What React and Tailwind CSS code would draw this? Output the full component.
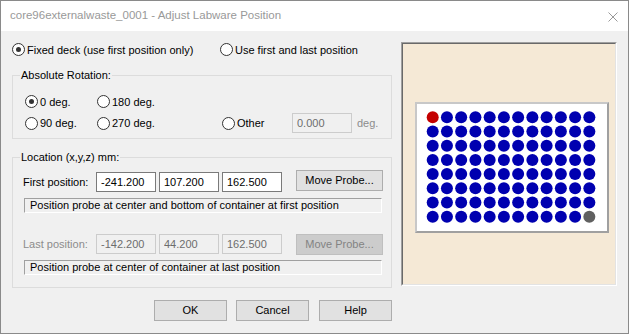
const WELL_ROWS = 8;
const WELL_COLS = 12;

function Radio({ checked, label, disabled, className = "" }) {
  return (
    <div className={`flex items-center ${className}`}>
      <span className="flex h-[13px] w-[13px] shrink-0 items-center justify-center rounded-full border border-[#333333] bg-white">
        {checked && <span className="h-[5px] w-[5px] rounded-full bg-[#333333]" />}
      </span>
      <span className={`ml-[2px] leading-[14px] ${disabled ? "text-[#8c8c8c]" : ""}`}>{label}</span>
    </div>
  );
}

function Field({ value, disabled, className = "" }) {
  return (
    <input
      readOnly
      value={value}
      className={`h-[20px] w-[60px] shrink-0 border px-[4px] outline-none ${
        disabled ? "border-[#cccccc] bg-[#f0f0f0] text-[#6d6d6d]" : "border-[#7a7a7a] bg-white text-black"
      } ${className}`}
    />
  );
}

function WinButton({ children, disabled, className = "" }) {
  return (
    <button
      className={`flex h-[21px] shrink-0 items-center justify-center border ${
        disabled ? "border-[#bfbfbf] bg-[#cccccc] text-[#838383]" : "border-[#adadad] bg-[#e1e1e1] text-black"
      } ${className}`}
    >
      {children}
    </button>
  );
}

function StatusLine({ children, className = "" }) {
  return (
    <div
      className={`ml-[1px] flex h-[15px] w-[358px] items-center border-t border-l border-t-[#a0a0a0] border-l-[#a0a0a0] border-r border-b border-r-white border-b-white pl-[5px] leading-[13px] ${className}`}
    >
      {children}
    </div>
  );
}

function GroupLabel({ children }) {
  return (
    <span className="absolute -top-[8px] left-[7px] bg-[#f0f0f0] px-[1px] leading-[14px]">{children}</span>
  );
}

function Plate() {
  const wells = [];
  for (let r = 0; r < WELL_ROWS; r++) {
    for (let c = 0; c < WELL_COLS; c++) {
      let fill = "#0000b0";
      if (r === 0 && c === 0) fill = "#c40000";
      if (r === WELL_ROWS - 1 && c === WELL_COLS - 1) fill = "#606060";
      wells.push(
        <circle key={`${r}-${c}`} cx={15.7 + c * 14.24} cy={13.3 + r * 14.2} r={6} fill={fill} />
      );
    }
  }
  return (
    <div className="ml-[12px] mt-[58px] h-[131px] w-[194px] border-2 border-t-[#c8c8c8] border-l-[#c8c8c8] border-r-[#a0a0a0] border-b-[#a0a0a0] bg-white">
      <svg width="190" height="127" viewBox="0 0 190 127">
        {wells}
      </svg>
    </div>
  );
}

export default function App() {
  return (
    <div className="h-[334px] w-[629px] overflow-hidden border border-[#8a8a8a] bg-[#f0f0f0] font-['Liberation_Sans',Arial,sans-serif] text-[11px] text-black">
      <div className="flex h-[30px] items-center justify-between bg-white pl-[9px] pr-[10px]">
        <span className="text-[11.5px] text-[#999999]">core96externalwaste_0001 - Adjust Labware Position</span>
        <svg width="10" height="10" viewBox="0 0 10 10" className="mt-[1px]">
          <path d="M0.5 0.5 L9.5 9.5 M9.5 0.5 L0.5 9.5" stroke="#999999" strokeWidth="1" />
        </svg>
      </div>

      <div className="flex items-start pl-[11px]">
        <div className="flex w-[380px] flex-col">
          <div className="mt-[12px] flex h-[13px] items-center">
            <Radio checked label="Fixed deck (use first position only)" className="w-[208px]" />
            <Radio label="Use first and last position" />
          </div>

          <div className="relative mt-[19px] h-[64px] border border-[#dcdcdc] pl-[12px] pt-[19px]">
            <GroupLabel>Absolute Rotation:</GroupLabel>
            <div className="flex h-[13px] items-center">
              <Radio checked label="0 deg." className="w-[72px]" />
              <Radio label="180 deg." />
            </div>
            <div className="mt-[5px] flex h-[20px] items-center">
              <Radio label="90 deg." className="w-[72px]" />
              <Radio label="270 deg." className="w-[125px]" />
              <Radio label="Other" className="w-[70px]" />
              <Field value="0.000" disabled />
              <span className="ml-[5px] text-[#8c8c8c]">deg.</span>
            </div>
          </div>

          <div className="relative mt-[18px] h-[131px] border border-[#dcdcdc] pl-[10px] pt-[12px]">
            <GroupLabel>Location (x,y,z) mm:</GroupLabel>
            <div className="flex h-[22px] items-start">
              <span className="mt-[5px] w-[73px] leading-[14px]">First position:</span>
              <Field value="-241.200" className="mt-[2px]" />
              <Field value="107.200" className="ml-[3px] mt-[2px]" />
              <Field value="162.500" className="ml-[3px] mt-[2px]" />
              <WinButton className="ml-[14px] w-[87px]">Move Probe...</WinButton>
            </div>
            <StatusLine className="mt-[6px]">Position probe at center and bottom of container at first position</StatusLine>

            <div className="mt-[21px] flex h-[21px] items-start">
              <span className="mt-[3px] w-[73px] leading-[14px] text-[#8c8c8c]">Last position:</span>
              <Field value="-142.200" disabled />
              <Field value="44.200" disabled className="ml-[3px]" />
              <Field value="162.500" disabled className="ml-[3px]" />
              <WinButton disabled className="ml-[14px] w-[87px]">Move Probe...</WinButton>
            </div>
            <StatusLine className="mt-[5px]">Position probe at center of container at last position</StatusLine>
          </div>

          <div className="mt-[12px] flex h-[21px] justify-end">
            <WinButton className="w-[73px]">OK</WinButton>
            <WinButton className="ml-[9px] w-[73px]">Cancel</WinButton>
            <WinButton className="ml-[10px] w-[73px]">Help</WinButton>
          </div>
        </div>

        <div className="ml-[9px] mt-[11px] h-[244px] w-[216px] border-t border-l border-t-[#a0a0a0] border-l-[#a0a0a0] border-r border-b border-r-white border-b-white">
          <div className="h-full w-full border-t border-l border-t-[#696969] border-l-[#696969] border-r border-b border-r-[#e3e3e3] border-b-[#e3e3e3] bg-[#f5e9d6]">
            <Plate />
          </div>
        </div>
      </div>
    </div>
  );
}
